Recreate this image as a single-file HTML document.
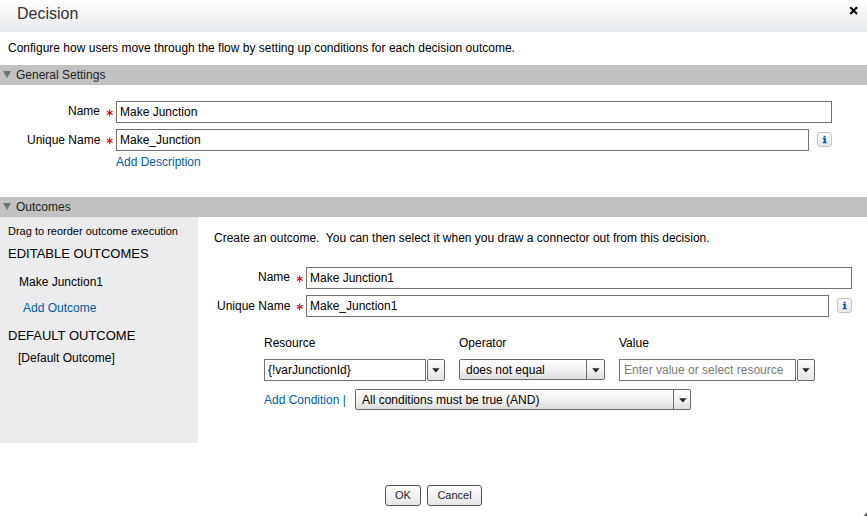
<!DOCTYPE html>
<html><head><meta charset="utf-8">
<style>
html,body{margin:0;padding:0;}
body{width:867px;height:516px;position:relative;overflow:hidden;background:#fff;font-family:"Liberation Sans",sans-serif;font-size:12px;color:#000;}
.a{position:absolute;white-space:nowrap;line-height:14px;}
#hdr{position:absolute;left:0;top:0;width:867px;height:32px;background:linear-gradient(#fdfdfd,#e7eaec);}
#title{left:17px;top:4px;font-size:16px;line-height:20px;color:#333;}
.bar{position:absolute;left:0;width:867px;height:20px;background:#c2c2c2;}
.tri{position:absolute;left:3px;width:0;height:0;border-left:4px solid transparent;border-right:4px solid transparent;border-top:7px solid #6b7474;}
.inp{position:absolute;box-sizing:border-box;border:1px solid #727272;background:#fff;height:22px;}
.inp span{position:absolute;left:3px;top:3px;line-height:14px;white-space:nowrap;}
.ast{color:#d21c1c;}
.link{color:#015ba7;}
.info{position:absolute;box-sizing:border-box;width:15px;height:15px;border:1px solid #c4c4c4;border-radius:3px;background:linear-gradient(#fbfbfb,#e6e8ea);}
.info b{position:absolute;left:0;top:0;width:13px;text-align:center;font:bold 11px/13px "Liberation Serif",serif;color:#1a5fd0;}
#left{position:absolute;left:0;top:217px;width:198px;height:226px;background:#ececee;}
.sel{position:absolute;box-sizing:border-box;border:1px solid #6b6b6b;border-radius:2px;height:21px;background:linear-gradient(#fefefe,#f4f4f4 45%,#dedede);}
.sel span{position:absolute;left:6px;top:3px;line-height:14px;white-space:nowrap;}
.sel i{position:absolute;top:0;bottom:0;border-left:1px solid #6b6b6b;}
.arr{position:absolute;}
.ddb{position:absolute;box-sizing:border-box;border:1px solid #6b6b6b;border-radius:2px;height:22px;width:18px;background:linear-gradient(#fdfdfd,#e4e4e4);}
.btn{position:absolute;box-sizing:border-box;border:1px solid #555;border-radius:3px;height:21px;background:linear-gradient(#fefefe,#e6e6e6);font-size:11px;line-height:19px;text-align:center;color:#222;}
</style></head><body>
<div id="hdr"></div>
<div class="a" id="title">Decision</div>
<svg style="position:absolute;left:849px;top:6px" width="10" height="10" viewBox="0 0 10 10"><path d="M2 2L7.3 7.3M7.3 2L2 7.3" stroke="#000" stroke-width="2.1" stroke-linecap="square"/></svg>

<div class="a" style="left:8px;top:41px;">Configure how users move through the flow by setting up conditions for each decision outcome.</div>

<div class="bar" style="top:65px;"></div>
<div class="tri" style="top:70.5px;"></div>
<div class="a" style="left:16px;top:68px;color:#222;">General Settings</div>

<div class="a" style="left:68px;top:104px;">Name</div>
<svg class="ast" style="position:absolute;left:106px;top:109px" width="8" height="8" viewBox="0 0 8 8"><path d="M3.7 0.4V7.2M0.8 2.1L6.6 5.5M6.6 2.1L0.8 5.5" stroke="#d40000" stroke-width="1.05"/></svg>
<div class="inp" style="left:116px;top:101px;width:716px;"><span>Make Junction</span></div>

<div class="a" style="left:27px;top:133px;">Unique Name</div>
<svg class="ast" style="position:absolute;left:106px;top:137px" width="8" height="8" viewBox="0 0 8 8"><path d="M3.7 0.4V7.2M0.8 2.1L6.6 5.5M6.6 2.1L0.8 5.5" stroke="#d40000" stroke-width="1.05"/></svg>
<div class="inp" style="left:116px;top:129px;width:693px;"><span>Make_Junction</span></div>
<div class="info" style="left:817px;top:132px;"><svg width="13" height="13" viewBox="0 0 13 13" style="position:absolute;left:0;top:0"><g fill="#1258cc"><rect x="5.6" y="2.8" width="2" height="1.7"/><rect x="5.7" y="5" width="2.2" height="5"/><rect x="4.8" y="9" width="3.9" height="1.3"/><rect x="4.8" y="5" width="1.2" height="1.1"/></g></svg></div>

<div class="a link" style="left:116px;top:155px;">Add Description</div>

<div class="bar" style="top:197px;"></div>
<div class="tri" style="top:202.5px;"></div>
<div class="a" style="left:16px;top:200px;color:#222;">Outcomes</div>

<div id="left"></div>
<div class="a" style="left:8px;top:224px;font-size:11px;">Drag to reorder outcome execution</div>
<div class="a" style="left:8px;top:246px;font-size:13px;line-height:16px;">EDITABLE OUTCOMES</div>
<div class="a" style="left:19px;top:275px;">Make Junction1</div>
<div class="a link" style="left:23px;top:301px;">Add Outcome</div>
<div class="a" style="left:8px;top:328px;font-size:13px;line-height:16px;">DEFAULT OUTCOME</div>
<div class="a" style="left:18px;top:351px;">[Default Outcome]</div>

<div class="a" style="left:214px;top:231px;">Create an outcome.&nbsp; You can then select it when you draw a connector out from this decision.</div>

<div class="a" style="left:258px;top:270px;">Name</div>
<svg class="ast" style="position:absolute;left:296px;top:275px" width="8" height="8" viewBox="0 0 8 8"><path d="M3.7 0.4V7.2M0.8 2.1L6.6 5.5M6.6 2.1L0.8 5.5" stroke="#d40000" stroke-width="1.05"/></svg>
<div class="inp" style="left:306px;top:267px;width:546px;"><span>Make Junction1</span></div>

<div class="a" style="left:217px;top:299px;">Unique Name</div>
<svg class="ast" style="position:absolute;left:296px;top:303px" width="8" height="8" viewBox="0 0 8 8"><path d="M3.7 0.4V7.2M0.8 2.1L6.6 5.5M6.6 2.1L0.8 5.5" stroke="#d40000" stroke-width="1.05"/></svg>
<div class="inp" style="left:306px;top:295px;width:523px;"><span>Make_Junction1</span></div>
<div class="info" style="left:837px;top:298px;"><svg width="13" height="13" viewBox="0 0 13 13" style="position:absolute;left:0;top:0"><g fill="#1258cc"><rect x="5.6" y="2.8" width="2" height="1.7"/><rect x="5.7" y="5" width="2.2" height="5"/><rect x="4.8" y="9" width="3.9" height="1.3"/><rect x="4.8" y="5" width="1.2" height="1.1"/></g></svg></div>

<div class="a" style="left:264px;top:336px;">Resource</div>
<div class="a" style="left:459px;top:336px;">Operator</div>
<div class="a" style="left:619px;top:336px;">Value</div>

<div class="inp" style="left:264px;top:359px;width:162px;height:22px;"><span>{!varJunctionId}</span></div>
<div class="ddb" style="left:427px;top:359px;"><svg class="arr" style="left:4px;top:8px;" width="8" height="5" viewBox="0 0 8 5"><path d="M0.2 0.2H7.6L3.9 4.5Z" fill="#222"/></svg></div>

<div class="sel" style="left:459px;top:359px;width:146px;"><span>does not equal</span><i style="left:126px;"></i><svg class="arr" style="left:131.5px;top:8px;" width="8" height="5" viewBox="0 0 8 5"><path d="M0.2 0.2H7.6L3.9 4.5Z" fill="#222"/></svg></div>

<div class="inp" style="left:619px;top:359px;width:177px;height:22px;"><span style="color:#7a7a7a;left:4px;">Enter value or select resource</span></div>
<div class="ddb" style="left:797px;top:359px;"><svg class="arr" style="left:4px;top:8px;" width="8" height="5" viewBox="0 0 8 5"><path d="M0.2 0.2H7.6L3.9 4.5Z" fill="#222"/></svg></div>

<div class="a link" style="left:264px;top:393px;">Add Condition |</div>
<div class="sel" style="left:355px;top:389px;width:336px;"><span>All conditions must be true (AND)</span><i style="left:317px;"></i><svg class="arr" style="left:322.5px;top:8px;" width="8" height="5" viewBox="0 0 8 5"><path d="M0.2 0.2H7.6L3.9 4.5Z" fill="#222"/></svg></div>

<div class="btn" style="left:385px;top:485px;width:36px;">OK</div>
<div class="btn" style="left:427px;top:485px;width:55px;">Cancel</div>
<svg style="position:absolute;left:861px;top:510px" width="6" height="6" viewBox="0 0 6 6"><path d="M6 2.5L6 6L2.5 6Z" fill="#4a4f50"/></svg>
</body></html>
